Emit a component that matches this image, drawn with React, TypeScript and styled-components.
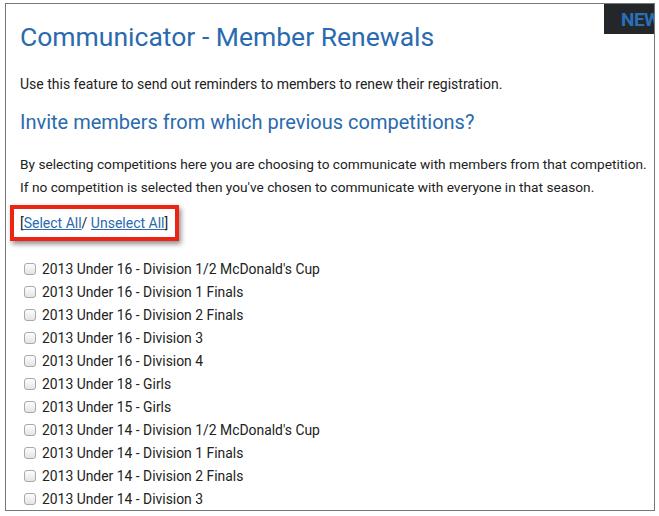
import React from "react";
import styled, { createGlobalStyle } from "styled-components";

const GlobalStyle = createGlobalStyle`
  body {
    margin: 0;
    background: #fff;
    font-family: Roboto, "Liberation Sans", sans-serif;
    color: #222;
  }
`;

const Frame = styled.div`
    position: relative;
    box-sizing: border-box;
    width: 650px;
    height: 508px;
    margin: 3px 0 0 5px;
    border: 1px solid #777;
    padding: 0 0 0 14px;
    overflow: hidden;
`;

const NewBadge = styled.div`
    position: absolute;
    top: -1px;
    right: -1px;
    width: 51px;
    height: 31px;
    background: #24272a;
    box-sizing: border-box;
    padding: 5px 0 0 17px;
    overflow: hidden;
    white-space: nowrap;
    color: #2a6fb8;
    font-weight: 700;
    font-size: 19px;
    letter-spacing: -0.5px;
`;

const Title = styled.h1`
    margin: 15px 0 0;
    font-size: 26.5px;
    font-weight: 400;
    line-height: 36px;
    color: #2a6aae;
`;

const Text = styled.p<{ size?: number }>`
    margin: 0;
    font-size: ${(p) => p.size ?? 14}px;
    line-height: 23px;
    white-space: nowrap;
`;

const Intro = styled(Text)`
    margin-top: 18px;
`;

const SubTitle = styled.h2`
    margin: 12px 0 0;
    font-size: 20px;
    font-weight: 400;
    line-height: 28px;
    color: #2a6aae;
`;

const Explain = styled(Text)`
    margin-top: 17px;
`;

const Highlight = styled.div`
    display: inline-flex;
    align-items: center;
    margin: 6px 0 0 -10px;
    padding: 0 7px 0 6px;
    height: 28px;
    border: 4px solid #ec2512;
    box-shadow: 2px 3px 5px rgba(0, 0, 0, 0.45);
    font-size: 14px;
`;

const Link = styled.a`
    color: #2a6aae;
    text-decoration: underline;
    cursor: pointer;
`;

const List = styled.ul`
    list-style: none;
    margin: 16px 0 0;
    padding: 0 0 0 4px;
`;

const Item = styled.li`
    display: flex;
    align-items: center;
    height: 23px;
    font-size: 13.9px;
`;

const Check = styled.input.attrs({ type: "checkbox" })`
    appearance: none;
    box-sizing: border-box;
    width: 12px;
    height: 12px;
    margin: 0 6px 0 0;
    border: 1px solid #a9a9a9;
    border-radius: 3px;
    background: linear-gradient(#fdfdfd, #e4e4e4);
`;

const competitions = [
    "2013 Under 16 - Division 1/2 McDonald's Cup",
    "2013 Under 16 - Division 1 Finals",
    "2013 Under 16 - Division 2 Finals",
    "2013 Under 16 - Division 3",
    "2013 Under 16 - Division 4",
    "2013 Under 18 - Girls",
    "2013 Under 15 - Girls",
    "2013 Under 14 - Division 1/2 McDonald's Cup",
    "2013 Under 14 - Division 1 Finals",
    "2013 Under 14 - Division 2 Finals",
    "2013 Under 14 - Division 3",
];

export default function App() {
    return (
        <>
            <GlobalStyle />
            <Frame>
                <NewBadge>NEW</NewBadge>
                <Title>Communicator - Member Renewals</Title>
                <Intro>Use this feature to send out reminders to members to renew their registration.</Intro>
                <SubTitle>Invite members from which previous competitions?</SubTitle>
                <Explain size={13.7}>
                    By selecting competitions here you are choosing to communicate with members from that competition.
                    <br />
                    If no competition is selected then you've chosen to communicate with everyone in that season.
                </Explain>
                <Highlight>
                    [<Link>Select All</Link>/&nbsp;<Link>Unselect All</Link>]
                </Highlight>
                <List>
                    {competitions.map((c) => (
                        <Item key={c}>
                            <Check />
                            {c}
                        </Item>
                    ))}
                </List>
            </Frame>
        </>
    );
}
